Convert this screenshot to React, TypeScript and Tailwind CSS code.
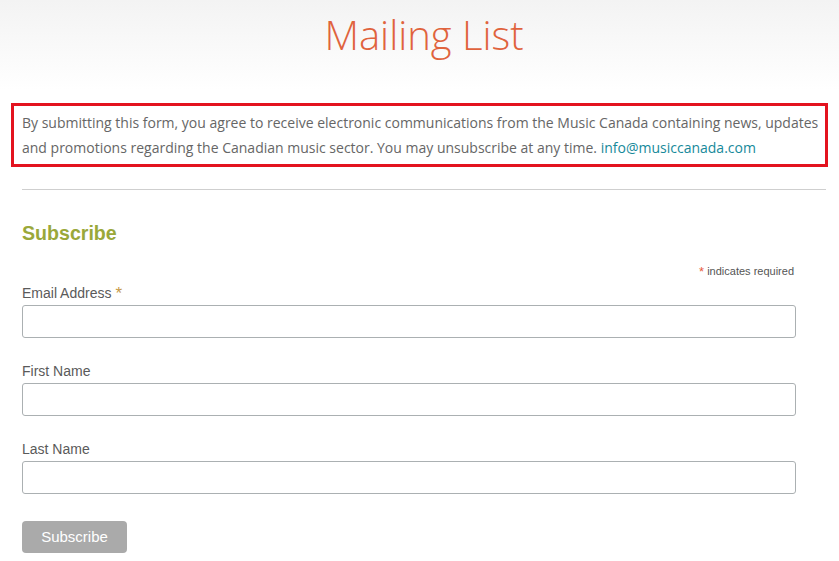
import React from "react";

function Field({ label, required }: { label: string; required?: boolean }) {
  return (
    <div className="w-[774px]">
      <label className="block text-[14px] leading-[18px] text-[#5a5a5a] pb-[3px]">
        {label}
        {required && (
          <span className="ml-[4px] text-[17px] leading-[0] text-[#c69a4a] relative top-[1px]">*</span>
        )}
      </label>
      <input
        type="text"
        className="block w-full h-[33px] border border-[#abb0b2] rounded-[3px] bg-white outline-none"
      />
    </div>
  );
}

export default function App() {
  return (
    <div className="w-full min-h-[561px] bg-white" style={{ fontFamily: "'Open Sans', sans-serif" }}>
      <div className="bg-gradient-to-b from-[#f3f3f3] to-white h-[90px] pt-[15px] pl-[9px]">
        <h1 className="text-center text-[40px] leading-[40px] font-light text-[#e0633d]">Mailing List</h1>
      </div>
      <div className="px-[11px] mt-[13px]">
        <div className="border-[3px] border-[#e3131f] px-[8px] pt-[4px] pb-[4px]">
          <p className="text-[14px] leading-[25px] text-[#666] whitespace-nowrap">
            By submitting this form, you agree to receive electronic communications from the Music Canada containing news, updates
            <br />
            and promotions regarding the Canadian music sector. You may unsubscribe at any time.{" "}
            <a className="text-[#16899a]">info@musiccanada.com</a>
          </p>
        </div>
      </div>
      <div className="mx-[22px] mr-[13px] mt-[22px] border-t border-[#cfcfcf]" />
      <div className="pl-[22px] pr-[13px]" style={{ fontFamily: "'Liberation Sans', Arial, sans-serif" }}>
        <h2 className="mt-[31px] text-[19.6px] leading-[24px] font-bold text-[#9aa83a]">Subscribe</h2>
        <div className="mt-[18px] text-right text-[11px] leading-[16px] text-[#555] mr-[32px]">
          <span className="text-[#e85c41] text-[13px] leading-[0] relative top-[1px]">*</span> indicates required
        </div>
        <div className="mt-[5px] flex flex-col gap-[24px]">
          <Field label="Email Address" required />
          <Field label="First Name" />
          <Field label="Last Name" />
          <button className="mt-[3px] w-[105px] h-[32px] rounded-[4px] bg-[#aaaaaa] text-white text-[15px] leading-[32px] text-center">
            Subscribe
          </button>
        </div>
      </div>
    </div>
  );
}
